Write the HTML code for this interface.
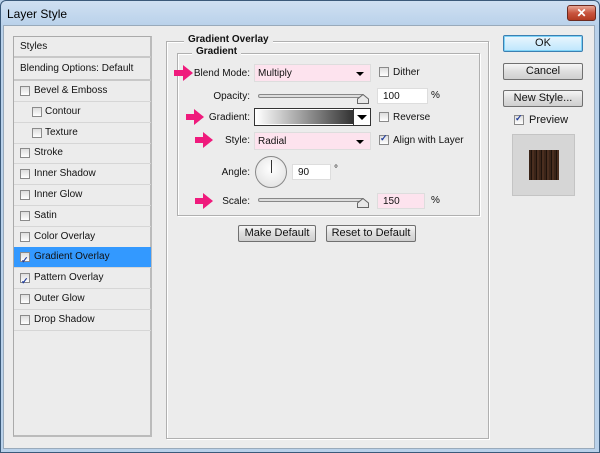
<!DOCTYPE html><html><head><style>
*{margin:0;padding:0;box-sizing:border-box}
body{width:600px;height:453px;overflow:hidden;font-family:"Liberation Sans",sans-serif;font-size:10px;color:#111;background:#b9d1ea}
.win{position:absolute;left:0;top:0;width:600px;height:453px;background:linear-gradient(#cfe0f2,#b9d1ea 25px);border:1px solid #3b5a7a;border-radius:6px 6px 0 0}
.title{position:absolute;left:6px;top:6px;font-size:12px;color:#000}
.close{position:absolute;left:566px;top:4px;width:29px;height:16px;border:1px solid #6b2a20;border-radius:3px;background:linear-gradient(#e8a896,#c9553f 50%,#b23a22);color:#fff;font-weight:bold;font-size:12px;text-align:center;line-height:14px}
.client{position:absolute;left:3px;top:25px;width:592px;height:424px;background:#ececec;border:1px solid #9ab;}
.abs{position:absolute}
.lp{position:absolute;left:13px;top:36px;width:139px;height:401px;border:1px solid #aaa;border-right:2px solid #bbb;border-bottom:2px solid #bbb;background:#ececec}
.row{position:absolute;left:0;width:137px;height:21px;border-bottom:1px solid #d6d6d6;line-height:20px;font-size:10px}
.cb{position:absolute;width:10px;height:10px;border:1px solid #8a8a8a;background:linear-gradient(#ddd,#fff)}
.ck::after{content:"✓";position:absolute;left:0px;top:-3px;font-size:9px;color:#203c9a;font-weight:bold}
.grp{position:absolute;border:1px solid #b0b0b0;box-shadow:inset 1px 1px #fff,1px 1px #fff}
.lg{position:absolute;background:#ececec;font-weight:bold;font-size:10px;padding:0 4px}
.lab{position:absolute;text-align:right;width:80px}
.sel{position:absolute;height:18px;background:#fde3ee;border:1px solid #ddd;padding-left:3px;line-height:17px}
.sel::after{content:"";position:absolute;right:6px;top:7px;border:4px solid transparent;border-top:4px solid #000}
.inp{position:absolute;height:16px;background:#fff;border:1px solid #ddd;padding-left:5px;line-height:15px}
.sl{position:absolute;height:4px;border:1px solid #888;border-radius:2px;background:#ddd}
.btn{position:absolute;height:17px;border:1px solid #707070;border-radius:2px;background:linear-gradient(#f6f6f6,#dedede 50%,#cfcfcf);text-align:center;line-height:15px;font-size:11px}
</style></head><body>
<div class="win"><div class="title">Layer Style</div><div class="close">✕</div></div>
<div class="client"></div>
<div class="lp">
<div class="row" style="top:0;height:21px;border-bottom:2px solid #c8c8c8;padding-left:6px">Styles</div>
<div class="row" style="top:21px;height:23px;border-bottom:2px solid #c8c8c8;padding-left:6px;line-height:22px">Blending Options: Default</div>
</div>
<div id="rows"></div>
<div class="grp" style="left:166px;top:41px;width:323px;height:398px"></div>
<div class="lg" style="left:184px;top:34px">Gradient Overlay</div>
<div class="grp" style="left:177px;top:53px;width:303px;height:163px"></div>
<div class="lg" style="left:192px;top:46px">Gradient</div>

<div class="lab" style="left:170px;top:68px">Blend Mode:</div>
<div class="sel" style="left:254px;top:64px;width:117px">Multiply</div>
<div class="cb" style="left:379px;top:67px"></div><div class="abs" style="left:393px;top:67px">Dither</div>
<div class="lab" style="left:170px;top:91px">Opacity:</div>
<div class="sl" style="left:258px;top:94px;width:106px"></div>
<svg class="abs" style="left:357px;top:94px" width="12" height="10"><path d="M0.5,9.5V5L6,0.5L11.5,5V9.5Z" fill="#e8e8e8" stroke="#666"/></svg>
<div class="inp" style="left:377px;top:88px;width:51px">100</div><div class="abs" style="left:431px;top:90px">%</div>
<div class="lab" style="left:170px;top:112px">Gradient:</div>
<div class="abs" style="left:254px;top:108px;width:117px;height:18px;border:1px solid #333;background:#fff"><div style="position:absolute;left:1px;top:1px;width:97px;height:14px;background:linear-gradient(90deg,#fff,#333)"></div><div style="position:absolute;right:0;top:0;width:17px;height:16px;border-left:1px solid #333;background:#fff"><div style="position:absolute;left:3px;top:6px;border:5px solid transparent;border-top:5px solid #000"></div></div></div>
<div class="cb" style="left:379px;top:112px"></div><div class="abs" style="left:393px;top:112px">Reverse</div>
<div class="lab" style="left:170px;top:135px">Style:</div>
<div class="sel" style="left:254px;top:132px;width:117px">Radial</div>
<div class="cb ck" style="left:379px;top:135px"></div><div class="abs" style="left:393px;top:135px">Align with Layer</div>
<div class="lab" style="left:170px;top:167px">Angle:</div>
<div class="abs" style="left:255px;top:156px;width:32px;height:32px;border-radius:50%;border:1px solid #888;background:radial-gradient(circle at 50% 40%,#fff,#ddd)"><div style="position:absolute;left:15px;top:3px;width:1px;height:13px;background:#333"></div></div>
<div class="inp" style="left:292px;top:164px;width:39px">90</div><div class="abs" style="left:334px;top:164px">°</div>
<div class="lab" style="left:170px;top:196px">Scale:</div>
<div class="sl" style="left:258px;top:198px;width:106px"></div>
<svg class="abs" style="left:357px;top:198px" width="12" height="10"><path d="M0.5,9.5V5L6,0.5L11.5,5V9.5Z" fill="#e8e8e8" stroke="#666"/></svg>
<div class="inp" style="left:377px;top:193px;width:48px;background:#fde3ee">150</div><div class="abs" style="left:431px;top:195px">%</div>
<div class="btn" style="left:238px;top:225px;width:78px">Make Default</div>
<div class="btn" style="left:326px;top:225px;width:90px">Reset to Default</div>
<svg class="abs" style="left:0;top:0" width="600" height="453">
<g fill="#ef1a7c">
<path d="M174,70h9v-5l10,8l-10,8v-5h-9z"/>
<path d="M186,114h8v-5l10,8l-10,8v-5h-8z"/>
<path d="M195,137h8v-5l10,8l-10,8v-5h-8z"/>
<path d="M195,198h8v-5l10,8l-10,8v-5h-8z"/>
</g></svg>
<div class="btn" style="left:503px;top:35px;width:80px;border:1px solid #3c7fb1;background:linear-gradient(#eaf6fd,#bee6fd);box-shadow:inset 0 0 0 1px #7ed3f7">OK</div>
<div class="btn" style="left:503px;top:63px;width:80px">Cancel</div>
<div class="btn" style="left:503px;top:90px;width:80px">New Style...</div>
<div class="cb ck" style="left:514px;top:115px"></div><div class="abs" style="left:529px;top:114px;font-size:11px">Preview</div>
<div class="abs" style="left:512px;top:134px;width:63px;height:62px;background:#d6d6d6;border:1px solid #c4c4c4"></div>
<div class="abs" style="left:529px;top:150px;width:30px;height:30px;background:repeating-linear-gradient(90deg,#3a2418 0 2px,#1e120b 2px 3px,#4a2e1f 3px 5px)"></div>
<script>
var items=[["Bevel & Emboss",0,0],["Contour",1,0],["Texture",1,0],["Stroke",0,0],["Inner Shadow",0,0],["Inner Glow",0,0],["Satin",0,0],["Color Overlay",0,0],["Gradient Overlay",0,1],["Pattern Overlay",0,1],["Outer Glow",0,0],["Drop Shadow",0,0]];
var h="";items.forEach(function(it,i){var y=81+i*20.8;var sel=i==8;
h+='<div class="row" style="left:14px;top:'+y+'px;'+(sel?'background:#3399ff;color:#111;':'')+'"><div class="cb'+(it[2]?' ck':'')+'" style="left:'+(it[1]?18:6)+'px;top:5px"></div><span style="position:absolute;left:'+(it[1]?31:20)+'px">'+it[0].replace('&','&amp;')+'</span></div>';});
document.getElementById('rows').innerHTML=h;
</script>
</body></html>
